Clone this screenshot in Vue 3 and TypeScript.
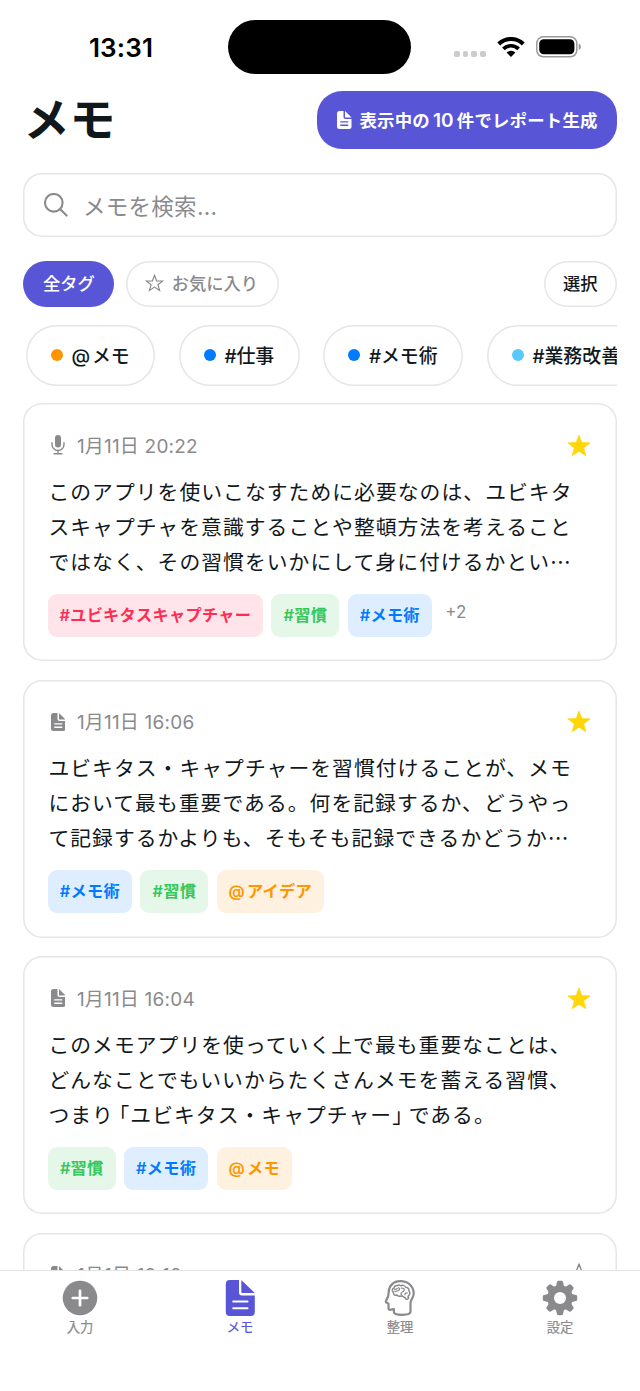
<script setup lang="ts">
interface Tag { label: string; tone: string; w: number }
interface Memo { kind: 'mic' | 'doc'; date: string; lines: string[]; tags: Tag[]; more?: string; starred: boolean }

const filters = [
  { label: '@メモ', tone: 'orange', w: 129.5 },
  { label: '#仕事', tone: 'blue', w: 121 },
  { label: '#メモ術', tone: 'blue', w: 140 },
  { label: '#業務改善', tone: 'sky', w: 159 },
]

const memos: Memo[] = [
  {
    kind: 'mic', date: '1月11日 20:22', starred: true, more: '+2',
    lines: [
      'このアプリを使いこなすために必要なのは、ユビキタ',
      'スキャプチャを意識することや整頓方法を考えること',
      'ではなく、その習慣をいかにして身に付けるかとい…',
    ],
    tags: [
      { label: '#ユビキタスキャプチャー', tone: 'pink', w: 215 },
      { label: '#習慣', tone: 'green', w: 67.7 },
      { label: '#メモ術', tone: 'blue', w: 84 },
    ],
  },
  {
    kind: 'doc', date: '1月11日 16:06', starred: true,
    lines: [
      'ユビキタス・キャプチャーを習慣付けることが、メモ',
      'において最も重要である。何を記録するか、どうやっ',
      'て記録するかよりも、そもそも記録できるかどうか…',
    ],
    tags: [
      { label: '#メモ術', tone: 'blue', w: 84 },
      { label: '#習慣', tone: 'green', w: 67.7 },
      { label: '@アイデア', tone: 'orange', w: 107 },
    ],
  },
  {
    kind: 'doc', date: '1月11日 16:04', starred: true,
    lines: [
      'このメモアプリを使っていく上で最も重要なことは、',
      'どんなことでもいいからたくさんメモを蓄える習慣、',
      'つまり「ユビキタス・キャプチャー」である。',
    ],
    tags: [
      { label: '#習慣', tone: 'green', w: 67.7 },
      { label: '#メモ術', tone: 'blue', w: 84 },
      { label: '@メモ', tone: 'orange', w: 75 },
    ],
  },
  { kind: 'doc', date: '1月1日 12:12', starred: false, lines: [], tags: [] },
]

const tabs = [
  { id: 'add', label: '入力' },
  { id: 'memo', label: 'メモ' },
  { id: 'brain', label: '整理' },
  { id: 'gear', label: '設定' },
]

// Splits a line so that corner brackets can be set tight
const pieces = (line: string) => line.split(/([「」])/).filter(Boolean)
const pieceClass = (p: string) => (p === '「' ? 'open' : p === '」' ? 'close' : '')
const px = (n: number) => ({ width: n + 'px' })
const teeth = [0, 45, 90, 135, 180, 225, 270, 315]
</script>

<template>
  <div class="screen">
    <header class="status">
      <span class="time">13:31</span>
      <span class="island"></span>
      <span class="signal"><i v-for="n in 4" :key="n"></i></span>
      <svg class="wifi" viewBox="0 0 28 20">
        <path d="M1.7 7A17.5 17.5 0 0 1 26.3 7" fill="none" stroke="#000" stroke-width="4" />
        <path d="M6.4 11.9A10.8 10.8 0 0 1 21.6 11.9" fill="none" stroke="#000" stroke-width="3.7" />
        <path d="M9.6 15.6A6.3 6.3 0 0 1 18.4 15.6L14 20Z" />
      </svg>
      <svg class="battery" viewBox="0 0 46 22">
        <rect x=".8" y=".8" width="40" height="20" rx="6.5" fill="none" stroke="#9a9a9c" stroke-width="1.5" />
        <rect x="3.2" y="3.3" width="35.2" height="15" rx="4.5" />
        <path d="M42.7 7.6q2.3 1 2.3 3.2t-2.3 3.2z" fill="#9a9a9c" />
      </svg>
    </header>

    <div class="heading">
      <h1>メモ</h1>
      <button class="report">
        <svg viewBox="0 0 29 36">
          <path d="M5 0H13V12Q13 16 17 16H29V31a5 5 0 0 1-5 5H5a5 5 0 0 1-5-5V5a5 5 0 0 1 5-5Z" />
          <path d="M16 0L29 13H17Q16 13 16 12Z" />
          <path d="M6.5 21.7H22.5M6.5 28.5H22.5" fill="none" stroke="#5856d6" stroke-width="2.8" />
        </svg>
        <span>表示中の<b>10</b>件でレポート生成</span>
      </button>
    </div>

    <div class="search">
      <svg viewBox="0 0 24 24"><circle cx="9.8" cy="9.8" r="8.8" /><path d="M16.3 16.3L22.6 22.6" /></svg>
      <span>メモを検索...</span>
    </div>

    <div class="controls">
      <button class="pill active">全タグ</button>
      <button class="pill fav">
        <svg viewBox="0 0 20 19"><path d="M10 1.4L12.2 7.2L18.7 7.4L13.6 11.3L15.4 17.4L10 13.8L4.6 17.4L6.4 11.3L1.3 7.4L7.8 7.2Z" /></svg>
        <span>お気に入り</span>
      </button>
      <button class="pill select">選択</button>
    </div>

    <div class="filters">
      <button v-for="f in filters" :key="f.label" class="chip" :style="px(f.w)">
        <i :class="f.tone"></i><span><em :class="{ at: f.label[0] === '@' }">{{ f.label[0] }}</em>{{ f.label.slice(1) }}</span>
      </button>
    </div>

    <main>
      <article v-for="(m, k) in memos" :key="k" class="card">
        <div class="meta">
          <svg v-if="m.kind === 'mic'" class="kind" viewBox="0 0 14 20">
            <rect x="4" y="0" width="6" height="12.5" rx="3" fill="#8a8a8d" />
            <path d="M1 7.8V9.5a6 6 0 0 0 12 0V7.8M7 15.5V18.6M3 18.7H11" fill="none" stroke="#8a8a8d" stroke-width="1.4" stroke-linecap="round" />
          </svg>
          <svg v-else class="kind doc" viewBox="0 0 29 36">
            <path d="M5 0H13V12Q13 16 17 16H29V31a5 5 0 0 1-5 5H5a5 5 0 0 1-5-5V5a5 5 0 0 1 5-5Z" />
            <path d="M16 0L29 13H17Q16 13 16 12Z" />
            <path d="M6.5 21.7H22.5M6.5 28.5H22.5" fill="none" stroke="#fff" stroke-width="2.6" />
          </svg>
          <span class="date">{{ m.date }}</span>
          <svg class="star" :class="{ off: !m.starred }" viewBox="0 0 24 23">
            <path d="M12 1L14.8 8.6L23 8.9L16.6 13.9L18.8 21.7L12 17.2L5.2 21.7L7.4 13.9L1 8.9L9.2 8.6Z" />
          </svg>
        </div>
        <div class="body">
          <p v-for="line in m.lines" :key="line"><span v-for="(p, j) in pieces(line)" :key="j" :class="pieceClass(p)">{{ p }}</span></p>
        </div>
        <div class="tags">
          <span v-for="t in m.tags" :key="t.label" class="tag" :class="t.tone" :style="px(t.w)"><em :class="{ at: t.label[0] === '@' }">{{ t.label[0] }}</em>{{ t.label.slice(1) }}</span>
          <span v-if="m.more" class="more">{{ m.more }}</span>
        </div>
      </article>
    </main>

    <nav>
      <a v-for="t in tabs" :key="t.id" :class="{ current: t.id === 'memo' }">
        <svg v-if="t.id === 'add'" viewBox="0 0 36 36">
          <circle cx="18" cy="18" r="17.3" />
          <path d="M18 10.8V25.2M10.8 18H25.2" stroke="#fff" stroke-width="2.7" stroke-linecap="round" />
        </svg>
        <svg v-else-if="t.id === 'memo'" viewBox="-3.8 0 36 36">
          <path d="M4 0H13.2V12.5Q13.2 15.5 16.2 15.5H29V32a4 4 0 0 1-4 4H4a4 4 0 0 1-4-4V4a4 4 0 0 1 4-4Z" />
          <path d="M15.5 0L29 13H16.5Q15.5 13 15.5 12Z" />
          <path d="M7.5 21.5H21.7M7.5 28.2H21.7" stroke="#fff" stroke-width="2.1" stroke-linecap="round" />
        </svg>
        <svg v-else-if="t.id === 'brain'" viewBox="-2.4 0 36 36" class="outline">
          <path stroke-width="2.2" d="M4.3 12.5C4.3 5.8 9 1.2 16 1.2C24 1.2 29.3 6.5 29.3 13.5C29.3 18 26.1 19.5 26.1 23V31.8C26.1 34 22 34.8 18 34.8C14 34.8 9.5 34 9.5 32V29L5.5 29.8Q3.9 29.8 4.1 27V23.6L1.7 22.3Q.9 21.6 1.8 20.3Q4.3 16.5 4.3 12.5Z" />
          <path stroke-width="1.5" d="M13 5.7C10.5 5.2 9.4 7 9.8 8C7.3 8.7 7.4 11.5 9 12.2C8.7 14.6 10.8 16 12.6 15C14 16.8 16.5 16.5 17.5 15.6C19 17.6 21 17 21.4 18.8Q23 20 24.2 18.4C23.4 17 23.5 16 24.7 15.3C26 13.4 25.4 11.7 24.6 11.2C25 8.5 23.2 7.3 21.5 7.5C20.4 5.1 17.8 4.8 16.3 5.8C15.3 4.8 13.8 4.8 13 5.7" />
          <path stroke-width="1.3" d="M10.3 9.3Q11.8 9.8 12.8 8.4M14.3 7.8Q15.9 9 14.5 10.3Q12.8 11.5 10.5 11.3M17 8.1Q19.9 7.8 19.8 10Q19.7 11.2 18 12Q16 12.8 17 15M20.5 14.8Q20.5 12.8 22.8 12.9" />
        </svg>
        <svg v-else viewBox="0 0 36 36">
          <circle cx="18" cy="18" r="12.8" />
          <path v-for="a in teeth" :key="a" :transform="`rotate(${a} 18 18)`" d="M13.8 7L15 2Q15.3.8 16.5.8H19.5Q20.7.8 21 2L22.2 7Z" />
          <circle cx="18" cy="18" r="6" class="hole" />
        </svg>
        <span>{{ t.label }}</span>
      </a>
    </nav>
  </div>
</template>

<style>
body { margin: 0; background: #fff; overflow: hidden; }
</style>

<style scoped>
* { box-sizing: border-box; }
.screen { position: relative; width: 640px; height: 1391px; overflow: hidden; background: #fff; color: #11181c; font-family: Inter, "Noto Sans CJK JP", sans-serif; padding: 0 23.5px 0 23.4px; }
button { border: 0; background: none; font: inherit; color: inherit; padding: 0; }
svg { display: block; flex: none; }
em { font-style: normal; }
.at { margin-right: 2px; }

.status { display: flex; align-items: center; height: 91.4px; padding: 3px 0 0 65.5px; color: #000; }
.time { width: 139.5px; font-size: 26px; font-weight: 600; letter-spacing: .2px; }
.island { width: 183px; height: 53.5px; border-radius: 27px; background: #000; }
.signal { display: flex; gap: 3px; margin: 14px 0 0 42.5px; }
.signal i { width: 5.8px; height: 5.8px; border-radius: 2px; background: #cbcbcd; }
.wifi { width: 28px; height: 20px; margin-left: 11px; }
.battery { width: 46px; height: 22px; margin-left: 10.5px; }

.heading { display: flex; justify-content: space-between; height: 58px; }
h1 { margin: -1px 0 0; font-size: 46px; line-height: 58px; font-weight: 700; }
.report { display: flex; align-items: center; width: 300px; height: 58px; padding-left: 20.5px; border-radius: 25px; background: #5856d6; color: #fff; font-size: 17.4px; font-weight: 600; letter-spacing: .2px; white-space: nowrap; }
.report svg { width: 14.5px; height: 18px; margin-right: 8px; fill: #fff; }
.report b { font-size: 19px; font-weight: 600; margin: 0 3px; }
.report span { margin-top: -1px; }

.search { display: flex; align-items: center; height: 64px; margin-top: 24px; padding-left: 21px; border-radius: 19px; box-shadow: inset 0 0 0 1.5px #e5e5ea; color: #8a8a8d; font-size: 22.5px; letter-spacing: .3px; }
.search svg { width: 24px; height: 24px; margin-right: 14.5px; fill: none; stroke: #8a8a8d; stroke-width: 2.1; stroke-linecap: round; }

.controls { display: flex; gap: 12px; height: 46.5px; margin-top: 23.3px; }
.pill { display: flex; align-items: center; justify-content: center; padding-bottom: 2px; border-radius: 23.3px; box-shadow: inset 0 0 0 1.5px #e5e5ea; font-size: 17.3px; font-weight: 500; }
.active { width: 91px; background: #5856d6; color: #fff; box-shadow: none; }
.fav { width: 152.5px; color: #8a8a8d; gap: 7.5px; padding-right: 2px; }
.fav svg { width: 19px; height: 18px; fill: none; stroke: #8a8a8d; stroke-width: 1.2; }
.select { width: 72.5px; margin-left: auto; }

.filters { display: flex; gap: 23.5px; height: 61px; margin-top: 17.7px; padding-left: 2.5px; overflow: hidden; }
.chip { display: flex; align-items: center; flex: none; padding-left: 25px; border-radius: 30.5px; box-shadow: inset 0 0 0 1.5px #e5e5ea; font-size: 18.9px; font-weight: 500; white-space: nowrap; }
.chip span { margin: -2px 0 0 -.5px; }
.chip i { width: 12px; height: 12px; margin-right: 9px; border-radius: 50%; }
i.orange { background: #ff9500; }
i.blue { background: #007aff; }
i.sky { background: #5ac8fa; }

main { display: flex; flex-direction: column; gap: 18.4px; margin-top: 17.5px; }
.card { flex: none; height: 258px; padding: 24.5px; border-radius: 19px; box-shadow: inset 0 0 0 1.5px #e5e5ea; }
.meta { display: flex; align-items: center; height: 35px; }
.kind { width: 14px; height: 20px; margin: 0 12px 0 3px; }
.doc { width: 14.5px; height: 18px; margin: 0 11.5px 0 3px; fill: #8a8a8d; }
.date { color: #8a8a8d; font-size: 19px; letter-spacing: .2px; margin-top: -2px; white-space: pre; }
.star { width: 24px; height: 23px; margin-left: auto; margin-right: 1px; fill: #ffd60a; stroke: #ffd60a; stroke-width: .8; stroke-linejoin: round; }
.star.off { fill: none; stroke: #8a8a8d; stroke-width: 1.4; }
.body { height: 105px; margin-top: 11px; font-family: "Noto Sans CJK JP", sans-serif; font-size: 20.8px; letter-spacing: 1.04px; line-height: 35px; white-space: nowrap; }
.body p { margin: 0; padding-left: .5px; }
.open, .close { font-feature-settings: "halt"; }
.open { margin-left: 5px; }
.close { margin-right: 5px; }
.tags { display: flex; gap: 8.6px; margin-top: 15px; }
.tag { height: 43px; border-radius: 9px; line-height: 43px; text-align: center; font-size: 16.2px; letter-spacing: .3px; font-weight: 600; white-space: nowrap; }
.pink { color: #ff2d55; background: #ffe4e9; }
.tag.green { color: #34c759; background: #e5f7e9; }
.tag.blue { color: #007aff; background: #dfeeff; }
.tag.orange { color: #ff9500; background: #fff1df; }
.more { margin-left: 5px; color: #8a8a8d; font-size: 17px; line-height: 36px; }

nav { position: absolute; left: 0; right: 0; bottom: 0; display: flex; height: 121px; padding-top: 8.5px; border-top: 1px solid #e3e3e6; background: #fff; }
nav a { flex: 1; display: flex; flex-direction: column; align-items: center; color: #8a8a8d; font-size: 13.3px; }
nav a.current { color: #5856d6; }
nav svg { width: 36px; height: 36px; fill: currentColor; }
nav span { line-height: 20px; margin-top: 1.5px; font-weight: 400; -webkit-text-stroke: .2px currentColor; }
nav .outline { fill: none; stroke: currentColor; stroke-linejoin: round; stroke-linecap: round; }
nav .hole { fill: #fff; }
</style>
